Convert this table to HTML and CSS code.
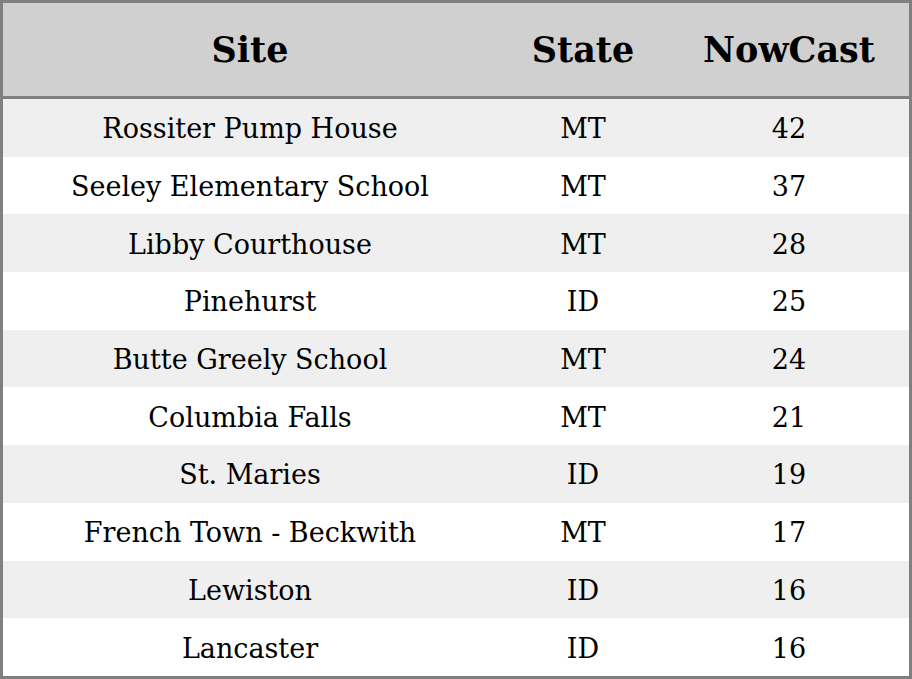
FILE: index.html
```html
<!DOCTYPE html>
<html>
<head>
<meta charset="utf-8">
<link rel="stylesheet" href="styles.css">
</head>
<body>
<table class="aq">
<colgroup><col class="c-site"><col class="c-state"><col class="c-now"></colgroup>
<thead>
<tr><th>Site</th><th>State</th><th>NowCast</th></tr>
</thead>
<tbody>
<tr><td>Rossiter Pump House</td><td>MT</td><td>42</td></tr>
<tr><td>Seeley Elementary School</td><td>MT</td><td>37</td></tr>
<tr><td>Libby Courthouse</td><td>MT</td><td>28</td></tr>
<tr><td>Pinehurst</td><td>ID</td><td>25</td></tr>
<tr><td>Butte Greely School</td><td>MT</td><td>24</td></tr>
<tr><td>Columbia Falls</td><td>MT</td><td>21</td></tr>
<tr><td>St. Maries</td><td>ID</td><td>19</td></tr>
<tr><td>French Town - Beckwith</td><td>MT</td><td>17</td></tr>
<tr><td>Lewiston</td><td>ID</td><td>16</td></tr>
<tr><td>Lancaster</td><td>ID</td><td>16</td></tr>
</tbody>
</table>
</body>
</html>
```
FILE: styles.css
```css
html, body { margin: 0; padding: 0; background: #fff; }
.aq {
  width: 912px;
  height: 679px;
  border-collapse: separate;
  border-spacing: 0;
  border: 3px solid #808080;
  table-layout: fixed;
  font-family: "DejaVu Serif", serif;
  color: #000;
}
.c-site { width: 494px; }
.c-state { width: 172px; }
.c-now { width: 240px; }
.aq th {
  height: 93px;
  padding: 0;
  background: #d0d0d0;
  border-bottom: 3px solid #808080;
  font-size: 35px;
  font-weight: bold;
  text-align: center;
}
.aq td {
  height: 55.7px;
  padding: 2px 0 0 0;
  font-size: 27px;
  font-weight: normal;
  text-align: center;
}
.aq tbody tr:nth-child(odd) td { background: #efefef; }
.aq tbody tr:nth-child(even) td { background: #fff; }
```
